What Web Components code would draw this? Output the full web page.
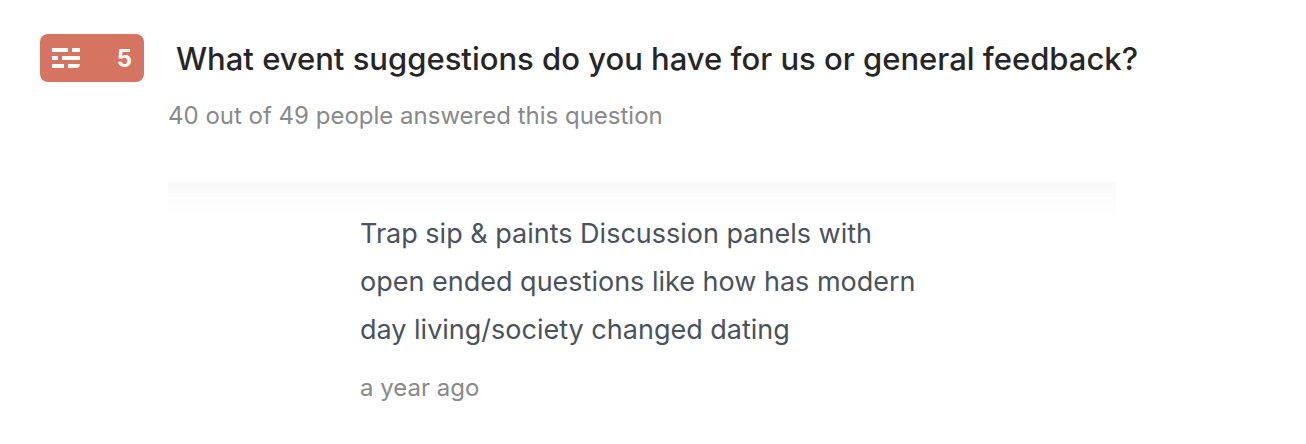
<!DOCTYPE html>
<html lang="en">
<head>
<meta charset="utf-8">
<title>Question feedback</title>
<style>
body { margin: 0; background: #fff; font-family: Inter, "Liberation Sans", sans-serif; }
</style>
</head>
<body>
<question-summary>
  <question-badge slot="badge" number="5"></question-badge>
  <span slot="title">What event suggestions do you have for us or general feedback?</span>
  <span slot="meta">40 out of 49 people answered this question</span>
  <response-list>
    <response-item>Trap sip &amp; paints Discussion panels with open ended questions like how has modern day living/society changed dating<span slot="time">a year ago</span></response-item>
  </response-list>
</question-summary>
<script>
class Base extends HTMLElement {
  constructor() {
    super();
    this.attachShadow({ mode: "open" }).innerHTML = this.constructor.markup;
  }
}
customElements.define("question-badge", class extends Base {
  static markup = `<style>
    :host { display: flex; box-sizing: border-box; width: 104px; height: 48px; padding: 0 12px; border-radius: 8px; background: #d57460; color: #fff; align-items: center; justify-content: space-between; font-size: 24px; font-weight: 700; }
    svg { display: block; }
  </style>
  <svg width="28" height="20" viewBox="0 0 28 20" fill="#fff" aria-hidden="true"><path d="M0 0h16v4H0zM20 0h8v4h-8zM0 8h6v4H0zM10 8h18v4H10zM0 16h12v4H0zM16 16h12q0 4-4 4h-8z"/></svg>
  <span></span>`;
  connectedCallback() { this.shadowRoot.querySelector("span").textContent = this.getAttribute("number"); }
});
customElements.define("question-summary", class extends Base {
  static markup = `<style>
    :host { display: block; padding: 34px 40px 0; }
    header { display: grid; grid-template-columns: 104px 1fr; column-gap: 24px; }
    h1 { margin: 0; padding-left: 8px; font-size: 31px; line-height: 50px; font-weight: 500; color: #262627; }
    p { grid-column: 2; margin: 14px 0 0; font-size: 24px; line-height: 36px; color: #898989; }
    section { margin: 48px 150px 0 128px; }
  </style>
  <header><slot name="badge"></slot><h1><slot name="title"></slot></h1><p><slot name="meta"></slot></p></header>
  <section><slot></slot></section>`;
});
customElements.define("response-list", class extends Base {
  static markup = `<style>
    :host { display: block; padding: 28px 192px 32px; background: linear-gradient(#f9f9f9, #fff) top / 100% 36px no-repeat; }
  </style><slot></slot>`;
});
customElements.define("response-item", class extends Base {
  static markup = `<style>
    :host { display: block; color: #4a525c; }
    p { margin: 0; font-size: 27px; line-height: 48px; }
    small { display: block; margin-top: 16px; font-size: 24px; line-height: 36px; color: #898989; }
  </style><p><slot></slot></p><small><slot name="time"></slot></small>`;
});
</script>
</body>
</html>
